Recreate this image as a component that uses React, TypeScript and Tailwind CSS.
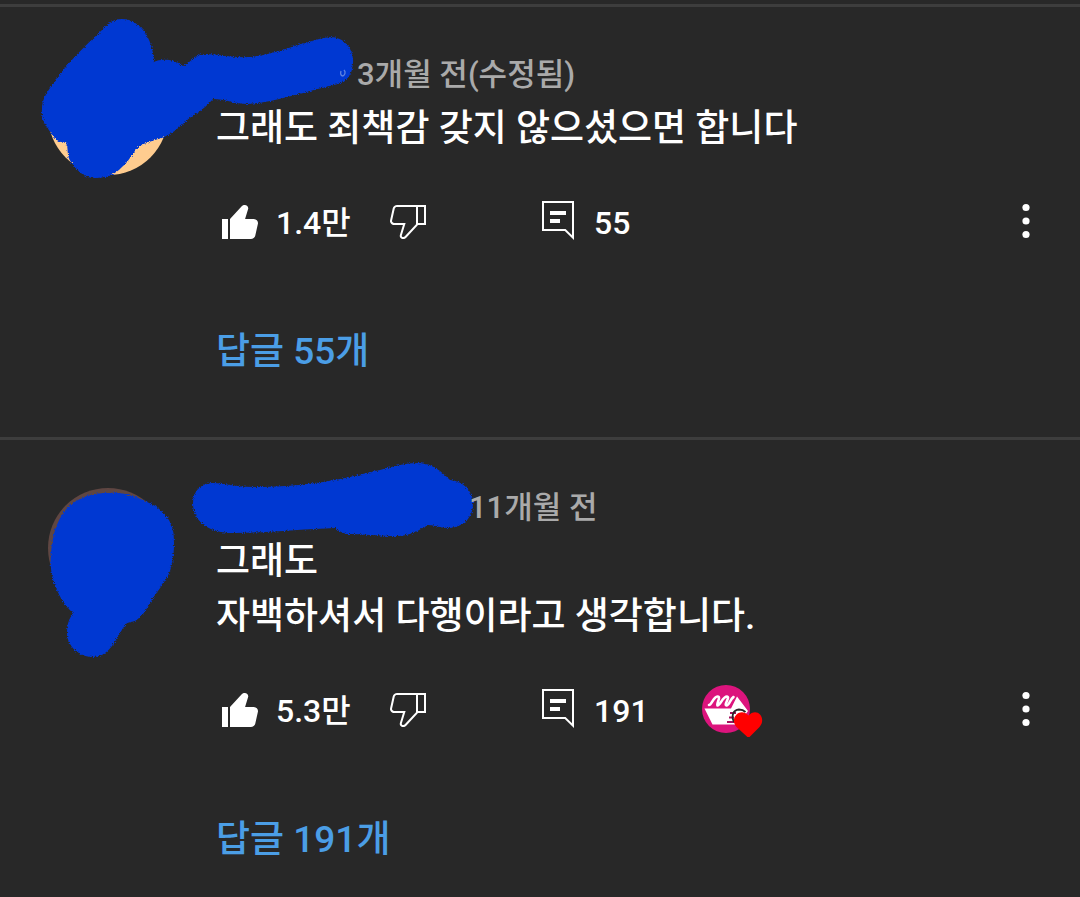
import React from "react";

type Comment = {
  id: number;
  time: string;
  lines: string[];
  likes: string;
  replies: number;
  hearted: boolean;
  avatarClass: string;
  nameClass: string;
  scribbleBox: string;
  scribbles: string[];
};

const comments: Comment[] = [
  {
    id: 1,
    time: "3개월 전(수정됨)",
    lines: ["그래도 죄책감 갖지 않으셨으면 합니다"],
    likes: "1.4만",
    replies: 55,
    hearted: false,
    avatarClass: "bg-[#ffcc8f]",
    nameClass: "w-[141px]",
    scribbleBox: "0 7 480 240",
    scribbles: [
      "M102 30C108 23 113 19 122 19C139 19 153 37 154 62C160 59 173 58 183 66C190 64 194 54 205 54C220 54 232 58 250 57C275 55 303 41 330 37C345 37 354 50 353 63C352 75 348 80 338 84C307 91 273 103 248 104C235 104 225 99 213 99C208 104 203 110 195 114C186 120 178 130 168 135C160 140 147 141 140 146C132 152 130 161 122 167C115 175 105 178 96 178C83 178 77 170 71 162C66 155 69 149 66 143C61 143 55 140 51 133C45 124 41 119 42 109C42 100 46 94 50 88C65 65 84 47 102 30Z",
    ],
  },
  {
    id: 2,
    time: "11개월 전",
    lines: ["그래도", "자백하셔서 다행이라고 생각합니다."],
    likes: "5.3만",
    replies: 191,
    hearted: true,
    avatarClass: "bg-[#5f4642]",
    nameClass: "w-[253px]",
    scribbleBox: "0 440 480 240",
    scribbles: [
      "M80 499C89 494 99 493 110 493C124 492 136 497 147 502C156 505 162 511 167 517C173 526 174 532 174 544C174 555 172 565 170 571C166 581 159 589 153 598C148 606 145 613 139 618C134 623 130 621 126 624C121 630 119 636 114 643C109 651 102 657 93 657C79 657 67 646 67 633C67 624 69 619 73 613C63 604 57 592 53 580C50 568 50 557 52 544C55 524 63 507 80 499Z",
      "M193 503C193 490 202 483 213 483C225 483 235 487 253 487C278 487 303 485 323 482C343 479 361 474 380 470C395 466 405 463 418 463C432 463 442 472 450 480C463 481 473 491 473 503C473 519 462 528 447 528C440 528 435 525 428 525C419 530 411 536 397 536C380 536 362 534 347 534C342 533 338 530 335 528C302 529 265 533 233 533C208 533 193 521 193 503Z",
    ],
  },
];

function LikeIcon() {
  return (
    <svg className="size-12 shrink-0" viewBox="0 0 24 24" fill="currentColor" aria-hidden="true">
      <path d="M3,11h3v10H3V11z M18.77,11h-4.23l1.52-4.94C16.38,5.03,15.54,4,14.38,4c-0.58,0-1.14,0.24-1.52,0.65L7,11v10h10.43c1.06,0,1.98-0.67,2.19-1.61l1.34-6C21.23,12.15,20.18,11,18.77,11z" />
    </svg>
  );
}

function DislikeIcon() {
  return (
    <svg className="size-12 shrink-0" viewBox="0 0 24 24" fill="currentColor" aria-hidden="true">
      <path d="M17,4h-1H6.57C5.5,4,4.59,4.67,4.38,5.61l-1.34,6C2.77,12.85,3.82,14,5.23,14h4.23l-1.52,4.94C7.62,19.97,8.46,21,9.62,21c0.58,0,1.14-0.24,1.52-0.65L17,14h4V4H17z M10.4,19.67C10.21,19.88,9.92,20,9.62,20c-0.26,0-0.5-0.11-0.63-0.3c-0.07-0.1-0.15-0.26-0.09-0.47l1.52-4.94l0.4-1.29H9.46H5.23c-0.41,0-0.8-0.17-1.03-0.46c-0.12-0.15-0.25-0.4-0.18-0.72l1.34-6C5.46,5.35,5.97,5,6.57,5H16v8.61L10.4,19.67z M20,13h-3V5h3V13z" />
    </svg>
  );
}

function ReplyIcon() {
  return (
    <svg className="size-12 shrink-0" viewBox="0 0 24 24" fill="currentColor" aria-hidden="true">
      <path fillRule="evenodd" d="M4 2H20V21.5L15.4 17H4Z M5 3V16H15.8L19 19.1V3Z" />
      <path d="M8 7h8v2H8z M8 11h5v2H8z" />
    </svg>
  );
}

function MoreIcon() {
  return (
    <svg className="h-12 w-3" viewBox="0 0 12 48" fill="currentColor" aria-hidden="true">
      <circle cx="6" cy="10.5" r="3.6" />
      <circle cx="6" cy="24" r="3.6" />
      <circle cx="6" cy="37.5" r="3.6" />
    </svg>
  );
}

function CreatorHeart() {
  return (
    <svg className="h-14 w-16 shrink-0" viewBox="0 0 64 56" role="img" aria-label="크리에이터 하트">
      <circle cx="24" cy="28" r="24" fill="#dc147d" />
      <path d="M2.5 27.500H29L35 15.500L46 30L36 43.500H10.500Z" fill="#fff" />
      <path
        d="M7 24C10 24 11 16 15.500 15.500C19.500 15.500 14 23 15.500 24.500C18.500 24.500 20.500 15.500 25 15.500C28.500 16 21.500 24 24.500 24.500C27.500 24.500 28 18 31.500 16"
        fill="none"
        stroke="#fff"
        strokeWidth="2.600"
        strokeLinecap="round"
      />
      <path d="M28 32h6M27 36.500h5M25 41h8" stroke="#a3125f" strokeWidth="1.8" />
      <path d="M32 41C29 35 31 29 37 28.500C40 28.500 42 29.500 43.500 31" fill="none" stroke="#282828" strokeWidth="1.8" />
      <path
        d="M46.500 57L34.500 46C31 42 31 37 34.500 33.500C38 30 43 30.500 46.500 34.500C50 30.500 55 30 58 33.500C61 37 61 42 57.500 46Z"
        fill="#f00"
      />
    </svg>
  );
}

function CommentItem({ comment }: { comment: Comment }) {
  return (
    <article className="relative border-t-[3px] border-[#3d3d3d] px-12 pt-12 pb-14 last:pb-6">
      <svg
        className="pointer-events-none absolute top-0 left-0 h-[240px] w-[480px]"
        viewBox={comment.scribbleBox}
        fill="#0037d2"
        aria-hidden="true"
      >
        <defs>
          <filter id={`chalk-${comment.id}`}>
            <feTurbulence type="fractalNoise" baseFrequency="0.9" numOctaves="2" />
            <feDisplacementMap
              in="SourceGraphic"
              scale="4"
              xChannelSelector="R"
              yChannelSelector="G"
            />
          </filter>
        </defs>
        <g filter={`url(#chalk-${comment.id})`}>
          {comment.scribbles.map((d) => (
            <path key={d} d={d} />
          ))}
        </g>
        {comment.id === 1 && (
          <path
            d="M341 71C340 74 341 76 343 76C345 75 346 72 344 70"
            fill="none"
            stroke="#5f83e0"
            strokeWidth="1.3"
          />
        )}
      </svg>
      <div className="flex gap-12">
        <div className={`size-[120px] shrink-0 rounded-full ${comment.avatarClass}`} />
        <div className="min-w-0 flex-1">
          <div className="flex text-[31px] leading-10 text-[#aaaaaa]">
            <span className={`shrink-0 ${comment.nameClass}`} />
            <time className="relative">{comment.time}</time>
          </div>
          <div className="mt-1.5 text-[37px] leading-[55px]">
            {comment.lines.map((line) => (
              <p key={line}>{line}</p>
            ))}
          </div>
          <div className="mt-[41px] flex h-12 items-center text-[32px]">
            <button type="button" aria-label="좋아요" className="flex w-[168px] items-center gap-3">
              <LikeIcon />
              <span className="pt-1">{comment.likes}</span>
            </button>
            <button type="button" aria-label="싫어요" className="w-[150px]">
              <DislikeIcon />
            </button>
            <button type="button" aria-label="답글" className="flex w-[168px] items-center gap-3">
              <ReplyIcon />
              <span className="pt-1">{comment.replies}</span>
            </button>
            {comment.hearted && <CreatorHeart />}
            <button type="button" aria-label="더보기" className="ml-auto">
              <MoreIcon />
            </button>
          </div>
          <a href="#replies" className="mt-20 block text-[37px] leading-[54px] text-[#4b9ee6]">
            답글 {comment.replies}개
          </a>
          <div className="h-0.5" />
        </div>
      </div>
    </article>
  );
}

export default function App() {
  return (
    <main className="min-h-screen overflow-hidden bg-[#282828] pt-1 font-['Roboto','Noto_Sans_CJK_KR',sans-serif] font-medium text-white">
      {comments.map((comment) => (
        <CommentItem key={comment.id} comment={comment} />
      ))}
    </main>
  );
}
